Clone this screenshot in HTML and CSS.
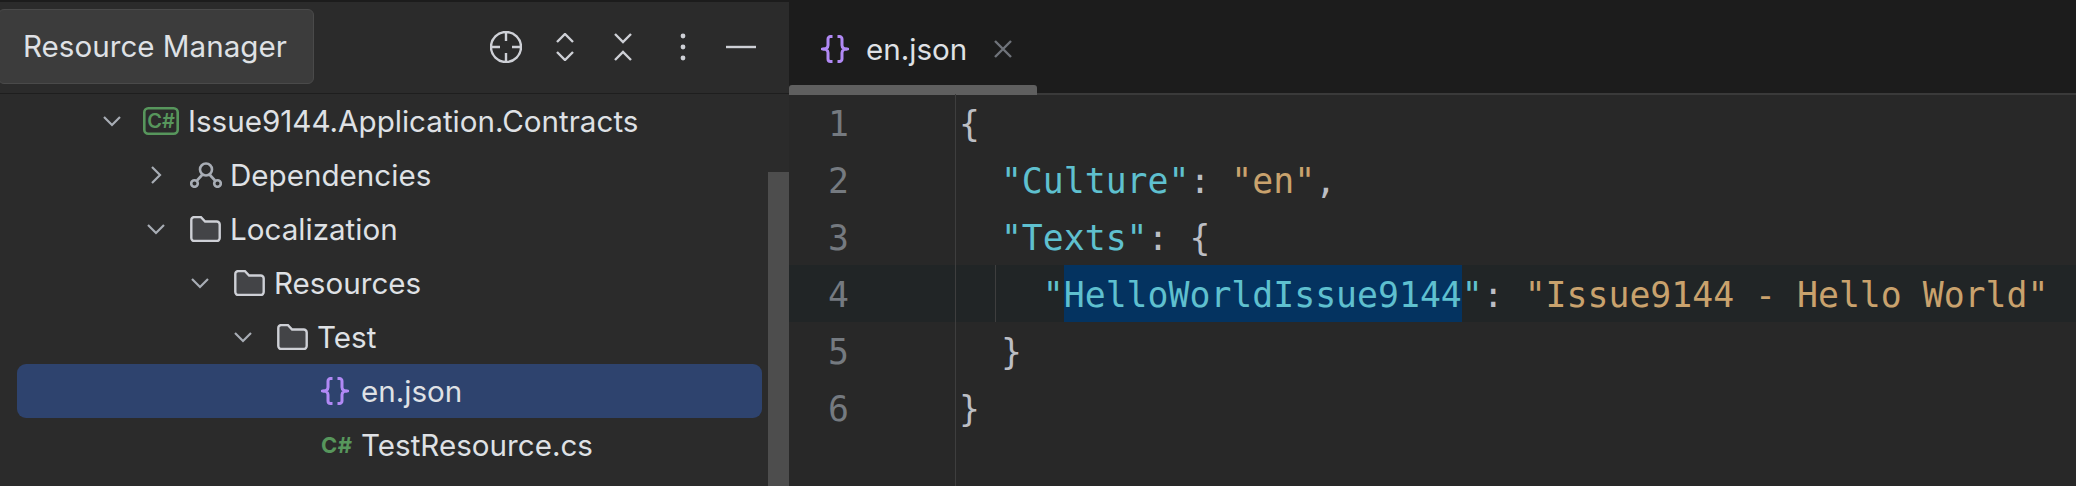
FILE: index.html
```html
<!DOCTYPE html>
<html lang="en">
<head>
<meta charset="utf-8">
<title>Resource Manager</title>
<link rel="stylesheet" href="styles.css">
</head>
<body>
<div class="app">
  <aside class="panel">
    <header class="panel-head">
      <div class="tooltip">Resource Manager</div>
      <div class="tools">
        <svg class="tool t-locate" viewBox="0 0 32 32"><circle cx="16" cy="16" r="15"/><path d="M16 1v9M16 22v9M1 16h9M22 16h9"/></svg>
        <svg class="tool t-expand" viewBox="0 0 18 28"><path d="M1 9l8-8 8 8M1 19l8 8 8-8"/></svg>
        <svg class="tool t-collapse" viewBox="0 0 18 28"><path d="M1 1l8 8 8-8M1 27l8-8 8 8"/></svg>
        <svg class="tool t-more" viewBox="0 0 6 28"><circle cx="3" cy="3" r="2.4"/><circle cx="3" cy="14" r="2.4"/><circle cx="3" cy="25" r="2.4"/></svg>
        <svg class="tool t-min" viewBox="0 0 30 4"><path d="M0 2h30"/></svg>
      </div>
    </header>
    <div class="tree">
      <div class="row d0">
        <svg class="chev" viewBox="0 0 18 18"><path d="M1 5l8 8 8-8"/></svg>
        <svg class="ico proj" viewBox="0 0 36 28"><rect x="1.3" y="1.3" width="33.400" height="25.400" rx="4"/><text x="18" y="20.500" text-anchor="middle">C#</text></svg>
        <span class="label">Issue9144.Application.Contracts</span>
      </div>
      <div class="row d1">
        <svg class="chev" viewBox="0 0 18 18"><path d="M5 1l8 8-8 8"/></svg>
        <svg class="ico dep" viewBox="0 0 32 26"><circle cx="16" cy="7.500" r="6"/><circle cx="4.500" cy="21.500" r="3.300"/><circle cx="27.500" cy="21.500" r="3.300"/><path d="M12.500 12.500L7 18.500M19.500 12.500L25 18.500"/></svg>
        <span class="label">Dependencies</span>
      </div>
      <div class="row d1">
        <svg class="chev" viewBox="0 0 18 18"><path d="M1 5l8 8 8-8"/></svg>
        <svg class="ico folder" viewBox="0 0 31 26"><path d="M1.300 4a3 3 0 0 1 3-3h6.500l4.300 4.500h11.600a3 3 0 0 1 3 3V22a3 3 0 0 1-3 3H4.300a3 3 0 0 1-3-3z"/></svg>
        <span class="label">Localization</span>
      </div>
      <div class="row d2">
        <svg class="chev" viewBox="0 0 18 18"><path d="M1 5l8 8 8-8"/></svg>
        <svg class="ico folder" viewBox="0 0 31 26"><path d="M1.300 4a3 3 0 0 1 3-3h6.500l4.300 4.500h11.600a3 3 0 0 1 3 3V22a3 3 0 0 1-3 3H4.300a3 3 0 0 1-3-3z"/></svg>
        <span class="label">Resources</span>
      </div>
      <div class="row d3">
        <svg class="chev" viewBox="0 0 18 18"><path d="M1 5l8 8 8-8"/></svg>
        <svg class="ico folder" viewBox="0 0 31 26"><path d="M1.300 4a3 3 0 0 1 3-3h6.500l4.300 4.500h11.600a3 3 0 0 1 3 3V22a3 3 0 0 1-3 3H4.300a3 3 0 0 1-3-3z"/></svg>
        <span class="label">Test</span>
      </div>
      <div class="row d4 selected">
        <svg class="ico braces" viewBox="0 0 28 28"><path d="M11.500 1.500H9.500a2.500 2.500 0 0 0-2.500 2.500V10a4 4 0 0 1-5 4 4 4 0 0 1 5 4v6a2.500 2.500 0 0 0 2.500 2.500h2M16.500 1.500h2A2.500 2.500 0 0 1 21 4V10a4 4 0 0 0 5 4 4 4 0 0 0-5 4v6a2.500 2.500 0 0 1-2.500 2.500h-2"/></svg>
        <span class="label">en.json</span>
      </div>
      <div class="row d4">
        <span class="ico cs">C#</span>
        <span class="label">TestResource.cs</span>
      </div>
    </div>
    <div class="tree-scroll"></div>
  </aside>
  <main class="editor">
    <div class="tabs">
      <div class="tab">
        <svg class="ico braces" viewBox="0 0 28 28"><path d="M11.500 1.500H9.500a2.500 2.500 0 0 0-2.500 2.500V10a4 4 0 0 1-5 4 4 4 0 0 1 5 4v6a2.500 2.500 0 0 0 2.500 2.500h2M16.500 1.500h2A2.500 2.500 0 0 1 21 4V10a4 4 0 0 0 5 4 4 4 0 0 0-5 4v6a2.500 2.500 0 0 1-2.500 2.500h-2"/></svg>
        <span class="tab-name">en.json</span>
        <svg class="close" viewBox="0 0 18 18"><path d="M1 1l16 16M17 1L1 17"/></svg>
      </div>
      <div class="tab-scroll"></div>
    </div>
    <div class="code">
      <div class="line"><span class="num">1</span><code class="src"><span class="p">{</span></code></div>
      <div class="line"><span class="num">2</span><code class="src">  <span class="k">"Culture"</span><span class="p">: </span><span class="s">"en"</span><span class="p">,</span></code></div>
      <div class="line"><span class="num">3</span><code class="src">  <span class="k">"Texts"</span><span class="p">: {</span></code></div>
      <div class="line current"><span class="num">4</span><code class="src guide">    <span class="k">"<span class="sel">HelloWorldIssue9144</span>"</span><span class="p">: </span><span class="s">"Issue9144 - Hello World"</span></code></div>
      <div class="line"><span class="num">5</span><code class="src">  <span class="p">}</span></code></div>
      <div class="line"><span class="num">6</span><code class="src"><span class="p">}</span></code></div>
      <div class="line rest"><span class="num"></span></div>
    </div>
  </main>
</div>
</body>
</html>
```
FILE: styles.css
```css
* { box-sizing: border-box; }
html, body { margin: 0; height: 100%; background: #282828; overflow: hidden; }
.app { display: flex; height: 486px; width: 2076px; font-family: Inter, "Liberation Sans", sans-serif; color: #dfe1e5; }

/* left panel */
.panel { position: relative; width: 789px; flex: none; background: #2b2b2b; border-top: 2px solid #1c1c1c; display: flex; flex-direction: column; }
.panel-head { height: 92px; flex: none; border-bottom: 1px solid #1e1e1e; display: flex; justify-content: flex-end; align-items: center; padding-bottom: 2px; }
.tooltip { position: absolute; left: -2px; top: 7px; width: 316px; height: 75px; background: #3c3c3c; border: 1px solid #4a4a4a; border-radius: 6px; font-size: 29.600px; line-height: 73px; padding-left: 24px; }
.tools { display: flex; align-items: center; padding-right: 33px; }
.tool { fill: none; stroke: #ced0d6; stroke-width: 2.400; flex: none; }
.t-locate { width: 32px; height: 32px; margin-right: 34px; }
.t-expand { width: 18px; height: 28px; margin-right: 40px; }
.t-collapse { width: 18px; height: 28px; margin-right: 48px; }
.t-more { width: 6px; height: 28px; margin-right: 40px; fill: #ced0d6; stroke: none; }
.t-min { width: 30px; height: 4px; }

.tree { display: flex; flex-direction: column; }
.row { height: 54px; flex: none; display: flex; align-items: center; font-size: 29.600px; margin: 0 27px 0 17px; border-radius: 9px; }
.row.selected { background: #2e436e; }
.chev { width: 18px; height: 18px; fill: none; stroke: #a8adb5; stroke-width: 2.200; flex: none; }
.ico { flex: none; }
.label { white-space: nowrap; }
.d0 { padding-left: 86px; }
.d1 { padding-left: 130px; }
.d2 { padding-left: 174px; }
.d3 { padding-left: 217px; }
.d4 { padding-left: 304px; }
.d0 .chev { margin-right: 22px; }
.d1 .chev, .d2 .chev, .d3 .chev { margin-right: 25px; }
.proj { width: 36px; height: 28px; margin-right: 9px; fill: none; stroke: #57965c; stroke-width: 2.600; }
.proj text { fill: #57965c; stroke: none; font-size: 20px; font-weight: 600; font-family: Inter, sans-serif; }
.dep { width: 32px; height: 26px; margin-right: 8px; fill: none; stroke: #a8adb5; stroke-width: 2.600; }
.folder { width: 31px; height: 26px; margin-right: 9px; fill: #434447; stroke: #ced0d6; stroke-width: 2.400; }
.braces { width: 28px; height: 28px; fill: none; stroke: #b189f5; stroke-width: 3; }
.row .braces { margin-right: 12px; }
.cs { width: 32px; margin-right: 8px; color: #57965c; font-size: 22px; font-weight: 700; letter-spacing: 0.5px; }
.tree-scroll { position: absolute; right: 0; top: 170px; bottom: 0; width: 21px; background: #4d4d4d; }

/* editor */
.editor { flex: 1; min-width: 0; display: flex; flex-direction: column; }
.tabs { position: relative; height: 95px; flex: none; background: #1c1c1c; border-bottom: 2px solid #3a3a3a; }
.tab { display: flex; align-items: center; height: 97px; padding-left: 32px; }
.tab .braces { margin-right: 17px; }
.tab-name { font-size: 29.600px; color: #dfe1e5; margin-right: 27px; }
.close { width: 18px; height: 18px; fill: none; stroke: #6f737a; stroke-width: 2.400; }
.tab-scroll { position: absolute; left: 0; top: 85px; width: 248px; height: 10px; background: #5f5f5f; border-radius: 3px 3px 0 0; }

.code { flex: 1; margin-top: -1px; display: flex; flex-direction: column; font-family: "DejaVu Sans Mono", "Liberation Mono", monospace; font-size: 34.800px; }
.line { position: relative; display: flex; height: 57px; line-height: 61px; flex: none; }
.line.rest { flex: 1; }
.line.current { background: #212526; }
.num { width: 167px; flex: none; padding-left: 39px; color: #757a80; border-right: 1px solid #3e3e3e; }
.src { font: inherit; white-space: pre; padding-left: 3px; }
.guide::before { content: ""; position: absolute; left: 206px; top: 0; bottom: 0; width: 1px; background: #3e3e3e; }
.p { color: #bcbec4; }
.k { color: #5fc0cf; }
.s { color: #c9a26d; }
.sel { display: inline-block; background: #043360; height: 57px; }
```
